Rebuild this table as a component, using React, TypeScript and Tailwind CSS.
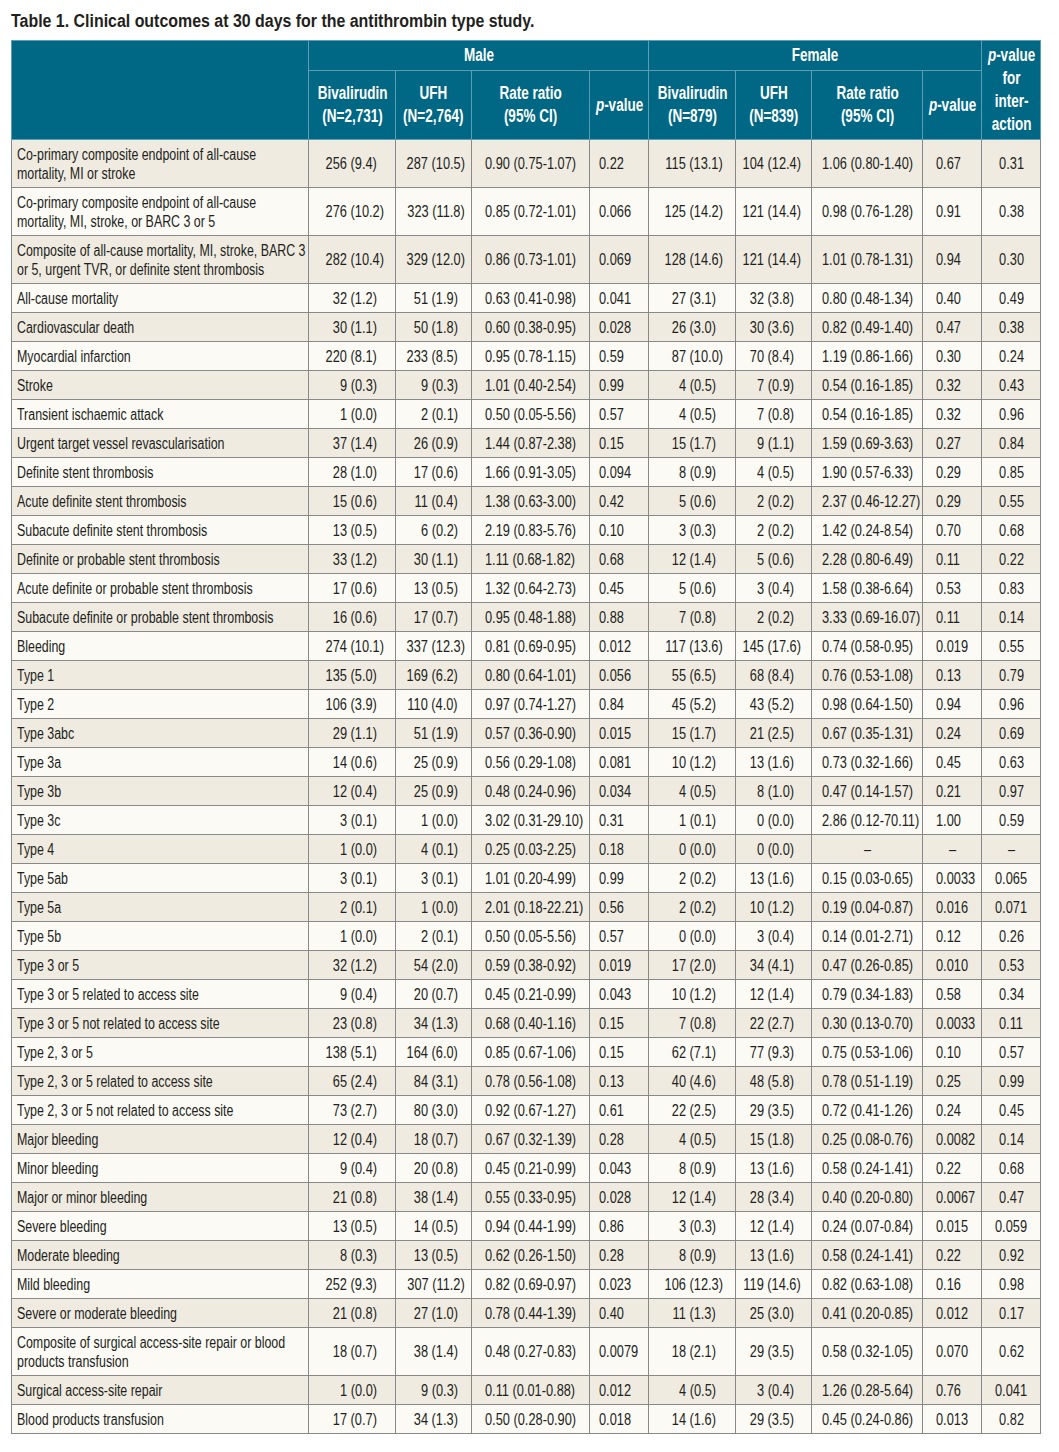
import type { ReactNode } from "react";

type Row = [string, string, string, string, string, string, string, string, string, string];

const rows: Row[] = [
  ["Co-primary composite endpoint of all-cause\nmortality, MI or stroke", "256 (9.4)", "287 (10.5)", "0.90 (0.75-1.07)", "0.22", "115 (13.1)", "104 (12.4)", "1.06 (0.80-1.40)", "0.67", "0.31"],
  ["Co-primary composite endpoint of all-cause\nmortality, MI, stroke, or BARC 3 or 5", "276 (10.2)", "323 (11.8)", "0.85 (0.72-1.01)", "0.066", "125 (14.2)", "121 (14.4)", "0.98 (0.76-1.28)", "0.91", "0.38"],
  ["Composite of all-cause mortality, MI, stroke, BARC 3\nor 5, urgent TVR, or definite stent thrombosis", "282 (10.4)", "329 (12.0)", "0.86 (0.73-1.01)", "0.069", "128 (14.6)", "121 (14.4)", "1.01 (0.78-1.31)", "0.94", "0.30"],
  ["All-cause mortality", "32 (1.2)", "51 (1.9)", "0.63 (0.41-0.98)", "0.041", "27 (3.1)", "32 (3.8)", "0.80 (0.48-1.34)", "0.40", "0.49"],
  ["Cardiovascular death", "30 (1.1)", "50 (1.8)", "0.60 (0.38-0.95)", "0.028", "26 (3.0)", "30 (3.6)", "0.82 (0.49-1.40)", "0.47", "0.38"],
  ["Myocardial infarction", "220 (8.1)", "233 (8.5)", "0.95 (0.78-1.15)", "0.59", "87 (10.0)", "70 (8.4)", "1.19 (0.86-1.66)", "0.30", "0.24"],
  ["Stroke", "9 (0.3)", "9 (0.3)", "1.01 (0.40-2.54)", "0.99", "4 (0.5)", "7 (0.9)", "0.54 (0.16-1.85)", "0.32", "0.43"],
  ["Transient ischaemic attack", "1 (0.0)", "2 (0.1)", "0.50 (0.05-5.56)", "0.57", "4 (0.5)", "7 (0.8)", "0.54 (0.16-1.85)", "0.32", "0.96"],
  ["Urgent target vessel revascularisation", "37 (1.4)", "26 (0.9)", "1.44 (0.87-2.38)", "0.15", "15 (1.7)", "9 (1.1)", "1.59 (0.69-3.63)", "0.27", "0.84"],
  ["Definite stent thrombosis", "28 (1.0)", "17 (0.6)", "1.66 (0.91-3.05)", "0.094", "8 (0.9)", "4 (0.5)", "1.90 (0.57-6.33)", "0.29", "0.85"],
  ["Acute definite stent thrombosis", "15 (0.6)", "11 (0.4)", "1.38 (0.63-3.00)", "0.42", "5 (0.6)", "2 (0.2)", "2.37 (0.46-12.27)", "0.29", "0.55"],
  ["Subacute definite stent thrombosis", "13 (0.5)", "6 (0.2)", "2.19 (0.83-5.76)", "0.10", "3 (0.3)", "2 (0.2)", "1.42 (0.24-8.54)", "0.70", "0.68"],
  ["Definite or probable stent thrombosis", "33 (1.2)", "30 (1.1)", "1.11 (0.68-1.82)", "0.68", "12 (1.4)", "5 (0.6)", "2.28 (0.80-6.49)", "0.11", "0.22"],
  ["Acute definite or probable stent thrombosis", "17 (0.6)", "13 (0.5)", "1.32 (0.64-2.73)", "0.45", "5 (0.6)", "3 (0.4)", "1.58 (0.38-6.64)", "0.53", "0.83"],
  ["Subacute definite or probable stent thrombosis", "16 (0.6)", "17 (0.7)", "0.95 (0.48-1.88)", "0.88", "7 (0.8)", "2 (0.2)", "3.33 (0.69-16.07)", "0.11", "0.14"],
  ["Bleeding", "274 (10.1)", "337 (12.3)", "0.81 (0.69-0.95)", "0.012", "117 (13.6)", "145 (17.6)", "0.74 (0.58-0.95)", "0.019", "0.55"],
  ["Type 1", "135 (5.0)", "169 (6.2)", "0.80 (0.64-1.01)", "0.056", "55 (6.5)", "68 (8.4)", "0.76 (0.53-1.08)", "0.13", "0.79"],
  ["Type 2", "106 (3.9)", "110 (4.0)", "0.97 (0.74-1.27)", "0.84", "45 (5.2)", "43 (5.2)", "0.98 (0.64-1.50)", "0.94", "0.96"],
  ["Type 3abc", "29 (1.1)", "51 (1.9)", "0.57 (0.36-0.90)", "0.015", "15 (1.7)", "21 (2.5)", "0.67 (0.35-1.31)", "0.24", "0.69"],
  ["Type 3a", "14 (0.6)", "25 (0.9)", "0.56 (0.29-1.08)", "0.081", "10 (1.2)", "13 (1.6)", "0.73 (0.32-1.66)", "0.45", "0.63"],
  ["Type 3b", "12 (0.4)", "25 (0.9)", "0.48 (0.24-0.96)", "0.034", "4 (0.5)", "8 (1.0)", "0.47 (0.14-1.57)", "0.21", "0.97"],
  ["Type 3c", "3 (0.1)", "1 (0.0)", "3.02 (0.31-29.10)", "0.31", "1 (0.1)", "0 (0.0)", "2.86 (0.12-70.11)", "1.00", "0.59"],
  ["Type 4", "1 (0.0)", "4 (0.1)", "0.25 (0.03-2.25)", "0.18", "0 (0.0)", "0 (0.0)", "–", "–", "–"],
  ["Type 5ab", "3 (0.1)", "3 (0.1)", "1.01 (0.20-4.99)", "0.99", "2 (0.2)", "13 (1.6)", "0.15 (0.03-0.65)", "0.0033", "0.065"],
  ["Type 5a", "2 (0.1)", "1 (0.0)", "2.01 (0.18-22.21)", "0.56", "2 (0.2)", "10 (1.2)", "0.19 (0.04-0.87)", "0.016", "0.071"],
  ["Type 5b", "1 (0.0)", "2 (0.1)", "0.50 (0.05-5.56)", "0.57", "0 (0.0)", "3 (0.4)", "0.14 (0.01-2.71)", "0.12", "0.26"],
  ["Type 3 or 5", "32 (1.2)", "54 (2.0)", "0.59 (0.38-0.92)", "0.019", "17 (2.0)", "34 (4.1)", "0.47 (0.26-0.85)", "0.010", "0.53"],
  ["Type 3 or 5 related to access site", "9 (0.4)", "20 (0.7)", "0.45 (0.21-0.99)", "0.043", "10 (1.2)", "12 (1.4)", "0.79 (0.34-1.83)", "0.58", "0.34"],
  ["Type 3 or 5 not related to access site", "23 (0.8)", "34 (1.3)", "0.68 (0.40-1.16)", "0.15", "7 (0.8)", "22 (2.7)", "0.30 (0.13-0.70)", "0.0033", "0.11"],
  ["Type 2, 3 or 5", "138 (5.1)", "164 (6.0)", "0.85 (0.67-1.06)", "0.15", "62 (7.1)", "77 (9.3)", "0.75 (0.53-1.06)", "0.10", "0.57"],
  ["Type 2, 3 or 5 related to access site", "65 (2.4)", "84 (3.1)", "0.78 (0.56-1.08)", "0.13", "40 (4.6)", "48 (5.8)", "0.78 (0.51-1.19)", "0.25", "0.99"],
  ["Type 2, 3 or 5 not related to access site", "73 (2.7)", "80 (3.0)", "0.92 (0.67-1.27)", "0.61", "22 (2.5)", "29 (3.5)", "0.72 (0.41-1.26)", "0.24", "0.45"],
  ["Major bleeding", "12 (0.4)", "18 (0.7)", "0.67 (0.32-1.39)", "0.28", "4 (0.5)", "15 (1.8)", "0.25 (0.08-0.76)", "0.0082", "0.14"],
  ["Minor bleeding", "9 (0.4)", "20 (0.8)", "0.45 (0.21-0.99)", "0.043", "8 (0.9)", "13 (1.6)", "0.58 (0.24-1.41)", "0.22", "0.68"],
  ["Major or minor bleeding", "21 (0.8)", "38 (1.4)", "0.55 (0.33-0.95)", "0.028", "12 (1.4)", "28 (3.4)", "0.40 (0.20-0.80)", "0.0067", "0.47"],
  ["Severe bleeding", "13 (0.5)", "14 (0.5)", "0.94 (0.44-1.99)", "0.86", "3 (0.3)", "12 (1.4)", "0.24 (0.07-0.84)", "0.015", "0.059"],
  ["Moderate bleeding", "8 (0.3)", "13 (0.5)", "0.62 (0.26-1.50)", "0.28", "8 (0.9)", "13 (1.6)", "0.58 (0.24-1.41)", "0.22", "0.92"],
  ["Mild bleeding", "252 (9.3)", "307 (11.2)", "0.82 (0.69-0.97)", "0.023", "106 (12.3)", "119 (14.6)", "0.82 (0.63-1.08)", "0.16", "0.98"],
  ["Severe or moderate bleeding", "21 (0.8)", "27 (1.0)", "0.78 (0.44-1.39)", "0.40", "11 (1.3)", "25 (3.0)", "0.41 (0.20-0.85)", "0.012", "0.17"],
  ["Composite of surgical access-site repair or blood\nproducts transfusion", "18 (0.7)", "38 (1.4)", "0.48 (0.27-0.83)", "0.0079", "18 (2.1)", "29 (3.5)", "0.58 (0.32-1.05)", "0.070", "0.62"],
  ["Surgical access-site repair", "1 (0.0)", "9 (0.3)", "0.11 (0.01-0.88)", "0.012", "4 (0.5)", "3 (0.4)", "1.26 (0.28-5.64)", "0.76", "0.041"],
  ["Blood products transfusion", "17 (0.7)", "34 (1.3)", "0.50 (0.28-0.90)", "0.018", "14 (1.6)", "29 (3.5)", "0.45 (0.24-0.86)", "0.013", "0.82"],
];

const dec = (v: string) => (/\(\d\./.test(v) ? v + "\u2007" : v);

// no condensed face is installed, so squeeze Liberation Sans horizontally;
// flex wrappers keep the unscaled box anchored on the right side / centre
const Label = ({ children }: { children: ReactNode }) => (
  <span className="inline-block origin-left scale-x-[0.775] whitespace-pre">{children}</span>
);
const L = ({ children }: { children: ReactNode }) => (
  <span className="inline-block origin-left scale-x-[0.8] whitespace-pre">{children}</span>
);
const R = ({ children }: { children: ReactNode }) => (
  <div className="flex justify-end">
    <span className="shrink-0 origin-right scale-x-[0.8] whitespace-pre">{children}</span>
  </div>
);
const C = ({ children }: { children: ReactNode }) => (
  <div className="flex justify-center">
    <span className="shrink-0 origin-center scale-x-[0.8] whitespace-pre">{children}</span>
  </div>
);
const H = ({ children }: { children: ReactNode }) => (
  <div className="flex justify-center">
    <span className="shrink-0 origin-center scale-x-[0.75] whitespace-nowrap">{children}</span>
  </div>
);

const th = "border border-[#5b9db4] p-0 text-center align-middle font-bold text-white";
const td = "border border-[#888888] align-middle whitespace-nowrap";

const PVal = () => (
  <>
    <i>p</i>-value
  </>
);

export default function App() {
  return (
    <div className="bg-white px-[11px] pt-[10px] pb-4 font-['Liberation_Sans',Arial,sans-serif] text-[#231f20]">
      <h1 className="mb-[8px] text-[18px] font-bold leading-[22px]">
        <span className="inline-block origin-left scale-x-[0.885] whitespace-nowrap">
          Table 1. Clinical outcomes at 30 days for the antithrombin type study.
        </span>
      </h1>
      <table className="w-[1029px] table-fixed border-collapse border border-[#3d4f55]">
        <colgroup>
          <col className="w-[297px]" />
          <col className="w-[87px]" />
          <col className="w-[76px]" />
          <col className="w-[118px]" />
          <col className="w-[59px]" />
          <col className="w-[87px]" />
          <col className="w-[76px]" />
          <col className="w-[111px]" />
          <col className="w-[59px]" />
          <col className="w-[59px]" />
        </colgroup>
        <thead className="bg-[#006784] text-[18px] leading-[23px]">
          <tr className="h-[30px]">
            <th rowSpan={2} className={th} />
            <th colSpan={4} className={th}>
              <H>Male</H>
            </th>
            <th colSpan={4} className={th}>
              <H>Female</H>
            </th>
            <th rowSpan={2} className={th}>
              <H>
                <PVal />
                <br />
                for
                <br />
                inter-
                <br />
                action
              </H>
            </th>
          </tr>
          <tr className="h-[69px]">
            {["2,731", "2,764"].map((n, i) => (
              <th key={n} className={th}>
                <H>
                  {i === 0 ? "Bivalirudin" : "UFH"}
                  <br />
                  (N={n})
                </H>
              </th>
            ))}
            <th className={th}>
              <H>
                Rate ratio
                <br />
                (95% CI)
              </H>
            </th>
            <th className={th}>
              <H>
                <PVal />
              </H>
            </th>
            {["879", "839"].map((n, i) => (
              <th key={n} className={th}>
                <H>
                  {i === 0 ? "Bivalirudin" : "UFH"}
                  <br />
                  (N={n})
                </H>
              </th>
            ))}
            <th className={th}>
              <H>
                Rate ratio
                <br />
                (95% CI)
              </H>
            </th>
            <th className={th}>
              <H>
                <PVal />
              </H>
            </th>
          </tr>
        </thead>
        <tbody className="text-[16px] leading-[19px]">
          {rows.map((r, i) => {
            const tall = r[0].includes("\n");
            return (
              <tr
                key={r[0]}
                className={`${tall ? "h-[48px]" : "h-[29px]"} ${i % 2 === 0 ? "bg-[#efebe1]" : "bg-[#fbfaf5]"}`}
              >
                <td className={`${td} pl-[5px]`}>
                  <Label>{r[0]}</Label>
                </td>
                <td className={`${td} pr-[11px]`}>
                  <R>{dec(r[1])}</R>
                </td>
                <td className={`${td} pr-[6px]`}>
                  <R>{dec(r[2])}</R>
                </td>
                <td className={`${td} pl-[13px]`}>
                  <L>{r[3]}</L>
                </td>
                <td className={`${td} pl-[9px]`}>
                  <L>{r[4]}</L>
                </td>
                <td className={`${td} pr-[12px]`}>
                  <R>{dec(r[5])}</R>
                </td>
                <td className={`${td} pr-[10px]`}>
                  <R>{dec(r[6])}</R>
                </td>
                {r[7] === "–" ? (
                  <td className={td}>
                    <C>{r[7]}</C>
                  </td>
                ) : (
                  <td className={`${td} pl-[10px]`}>
                    <L>{r[7]}</L>
                  </td>
                )}
                {r[8] === "–" ? (
                  <td className={td}>
                    <C>{r[8]}</C>
                  </td>
                ) : (
                  <td className={`${td} pl-[13px]`}>
                    <L>{r[8]}</L>
                  </td>
                )}
                <td className={td}>
                  <C>{r[9]}</C>
                </td>
              </tr>
            );
          })}
        </tbody>
      </table>
    </div>
  );
}
